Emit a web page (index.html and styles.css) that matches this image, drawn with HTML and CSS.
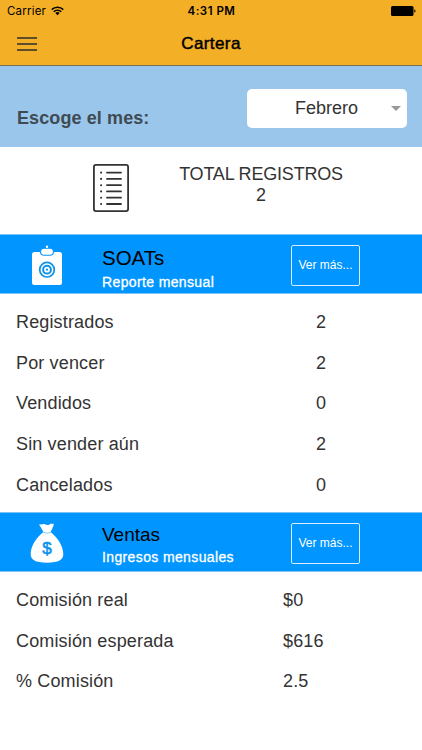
FILE: index.html
```html
<!DOCTYPE html>
<html lang="es">
<head>
    <meta charset="UTF-8">
    <meta name="viewport" content="width=device-width, initial-scale=1.0">
    <title>Cartera</title>
    <link rel="stylesheet" href="styles.css">
</head>
<body>
    <header class="top">
        <div class="status-bar">
            <div class="carrier">
                <span>Carrier</span>
                <svg width="13" height="10" viewBox="0 0 13 10" fill="none" stroke="#000" stroke-width="1.5">
                    <path d="M0.7 3.6a8.3 8.3 0 0 1 11.6 0"/>
                    <path d="M2.7 5.7a5.4 5.4 0 0 1 7.6 0"/>
                    <path d="M6.5 9.2L4.4 7.1a3 3 0 0 1 4.2 0z" fill="#000" stroke="none"/>
                </svg>
            </div>
            <div class="time">4:31 PM</div>
            <div class="battery">
                <svg width="25" height="10" viewBox="0 0 25 10">
                    <rect width="22.5" height="10" rx="1.6"/>
                    <path d="M23.3 3.3c1.7 0.4 1.7 3 0 3.4z"/>
                </svg>
            </div>
        </div>
        <nav class="nav-bar">
            <div class="menu-btn">
                <span></span>
                <span></span>
                <span></span>
            </div>
            <h1>Cartera</h1>
        </nav>
    </header>

    <section class="month">
        <label>Escoge el mes:</label>
        <div class="month-select">
            <span>Febrero</span>
            <i class="caret"></i>
        </div>
    </section>

    <section class="total">
        <svg class="list-icon" width="36" height="48" viewBox="0 0 36 48" fill="none" stroke="#333" stroke-linecap="round">
            <rect x="0.9" y="0.9" width="34.2" height="46.2" rx="2" stroke-width="1.8"/>
            <path d="M14 8.6h14M14 14.9h14M14 21.2h14M14 27.4h14M14 33.7h14M14 40h14" stroke-width="1.8"/>
            <path d="M8.1 8.6h0.01M8.1 14.9h0.01M8.1 21.2h0.01M8.1 27.4h0.01M8.1 33.7h0.01M8.1 40h0.01" stroke-width="2.1"/>
        </svg>
        <div class="total-text">
            <div>TOTAL REGISTROS</div>
            <div>2</div>
        </div>
    </section>

    <section class="panel-header">
        <svg class="panel-icon" width="34" height="42" viewBox="0 0 34 42">
            <rect x="2" y="7" width="30" height="33" rx="2.5" fill="#fff"/>
            <rect x="10.6" y="3.2" width="12.8" height="7" rx="3.2" fill="#fff" stroke="#0095ff" stroke-width="1.1"/>
            <circle cx="17" cy="1.8" r="1.2" fill="#fff"/>
            <g fill="none" stroke="#0e93ea">
                <circle cx="17" cy="24.7" r="7.3" stroke-width="1.7"/>
                <circle cx="17" cy="24.7" r="3.9" stroke-width="2"/>
            </g>
            <circle cx="17" cy="24.7" r="1.1" fill="#0e93ea"/>
        </svg>
        <div class="panel-title soats">
            <h2>SOATs</h2>
            <p>Reporte mensual</p>
        </div>
        <button class="more-btn">Ver más...</button>
    </section>
    <ul class="rows">
        <li><span>Registrados</span><span>2</span></li>
        <li><span>Por vencer</span><span>2</span></li>
        <li><span>Vendidos</span><span>0</span></li>
        <li><span>Sin vender aún</span><span>2</span></li>
        <li><span>Cancelados</span><span>0</span></li>
    </ul>

    <section class="panel-header">
        <svg class="panel-icon" width="34" height="42" viewBox="0 0 34 42">
            <path fill="#fff" d="M8.9 1.2C11.5 2 13 0.4 15 1.3c1.5 0.8 3 0.8 4.5 0.1 1.5-0.8 2.5-0.4 4.4-0.6C23.1 4.3 21.8 6.800 20.600 9c6 4.500 12.700 13.500 12.700 22.100 0 5.500-4.500 8.700-16.300 8.700S0.700 36.600 0.700 31.100C0.700 22.500 7.200 13.500 13.400 9 12 6.300 10.500 3.600 8.900 1.200z"/>
            <path d="M13.3 9.500q3.700 1.300 7.400 0" fill="none" stroke="#0095ff" stroke-width="0.5"/>
            <text class="bag-sign" x="17" y="30.500" text-anchor="middle">$</text>
        </svg>
        <div class="panel-title">
            <h2>Ventas</h2>
            <p>Ingresos mensuales</p>
        </div>
        <button class="more-btn">Ver más...</button>
    </section>
    <ul class="rows money">
        <li><span>Comisión real</span><span>$0</span></li>
        <li><span>Comisión esperada</span><span>$616</span></li>
        <li><span>% Comisión</span><span>2.5</span></li>
    </ul>
</body>
</html>
```
FILE: styles.css
```css
* {
    margin: 0;
    padding: 0;
    box-sizing: border-box;
}

body {
    font-family: "Liberation Sans", Arial, sans-serif;
    background: #fff;
    color: #333;
}

svg {
    display: block;
}

.top {
    height: 66px;
    background: #f3af25;
    border-bottom: 1px solid #77715a;
    color: #000;
}

.status-bar {
    display: grid;
    grid-template-columns: 1fr auto 1fr;
    align-items: center;
    height: 22px;
    padding: 0 6px 0 7px;
    font-family: Inter, sans-serif;
    font-size: 11.5px;
}

.carrier {
    display: flex;
    align-items: center;
    gap: 5px;
    letter-spacing: 0.2px;
}

.time {
    font-weight: 600;
    letter-spacing: 0.5px;
}

.battery {
    display: flex;
    justify-content: flex-end;
}

.nav-bar {
    display: grid;
    grid-template-columns: 1fr auto 1fr;
    align-items: center;
    height: 43px;
    padding: 0 17px;
}

.menu-btn {
    display: flex;
    flex-direction: column;
    gap: 4px;
    width: 20px;
}

.menu-btn span {
    height: 2px;
    background: #5d4e2d;
}

.nav-bar h1 {
    font-size: 17px;
    font-weight: normal;
    letter-spacing: 0.4px;
    -webkit-text-stroke: 0.45px #000;
}

.month {
    display: flex;
    justify-content: space-between;
    height: 81px;
    padding: 23px 15px 0 17px;
    background: #99c6ea;
}

.month label {
    padding-top: 19px;
    font-size: 18px;
    line-height: 21px;
    font-weight: bold;
    letter-spacing: 0.1px;
    color: #3f4a52;
}

.month-select {
    display: flex;
    align-items: center;
    justify-content: space-between;
    width: 160px;
    height: 39px;
    padding: 0 6px 0 48px;
    background: #fff;
    border-radius: 5px;
    font-size: 18px;
}

.caret {
    border: 5px solid transparent;
    border-top-color: #999;
    border-bottom: 0;
    margin-bottom: 1px;
}

.total {
    display: flex;
    height: 87px;
    padding: 17px 0 0 93px;
}

.total-text {
    width: 164px;
    margin-left: 50px;
    font-size: 18px;
    line-height: 21px;
    letter-spacing: -0.2px;
    text-align: center;
    white-space: nowrap;
}

.panel-header {
    display: flex;
    height: 60px;
    padding-left: 30px;
    background: #0095ff;
    border-top: 1px solid #7cc3f5;
    border-bottom: 1px solid #7cc3f5;
}

.panel-icon {
    margin-top: 10px;
}

.panel-title {
    width: 190px;
    padding: 10px 0 0 38px;
    margin-right: 37px;
    white-space: nowrap;
}

.panel-title h2 {
    height: 25px;
    font-size: 19px;
    line-height: 24px;
    font-weight: normal;
    color: #000;
}

.panel-title p {
    font-size: 14px;
    line-height: 18px;
    letter-spacing: 0.37px;
    color: #fff;
    -webkit-text-stroke: 0.3px #fff;
}

.panel-title.soats h2 {
    height: 28px;
    font-size: 20.5px;
    line-height: 26px;
}

.more-btn {
    width: 69px;
    height: 41px;
    margin-top: 10px;
    padding-bottom: 2px;
    background: none;
    border: 1px solid #d9eeff;
    border-radius: 2px;
    color: #fff;
    font-family: inherit;
    font-size: 12px;
    white-space: nowrap;
}

.bag-sign {
    font-size: 17px;
    fill: #0e93ea;
    stroke: #0e93ea;
    stroke-width: 0.6px;
}

.rows {
    height: 218px;
    padding-top: 8px;
    list-style: none;
    font-size: 18px;
    letter-spacing: 0.15px;
}

.rows li {
    display: grid;
    grid-template-columns: 300px 1fr;
    align-items: center;
    height: 40.7px;
    padding-left: 16px;
}

.rows.money {
    height: auto;
}

.rows.money li {
    grid-template-columns: 267px 1fr;
}
```
